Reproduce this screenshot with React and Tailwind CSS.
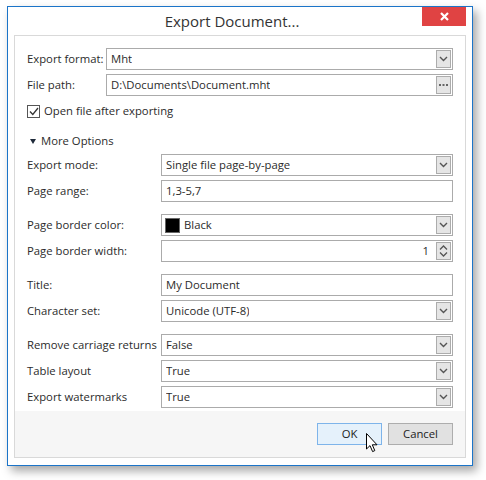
import React from 'react'

function Chevron() {
    return (
        <svg width="9" height="6" viewBox="0 0 9 6">
            <path d="M1 1 L4.5 4.5 L8 1" fill="none" stroke="#555" strokeWidth="1.4" />
        </svg>
    )
}

function DropButton() {
    return (
        <div className="ml-auto w-[15px] h-[18px] border border-[#acacac] bg-[#e5e5e5] flex items-center justify-center">
            <Chevron />
        </div>
    )
}

function Field({ value, drop, children }) {
    return (
        <div className="h-[22px] border border-[#ababab] bg-white flex items-center pl-[4px] pr-[1px]">
            {children}
            {value && <span className="truncate">{value}</span>}
            {drop && <DropButton />}
        </div>
    )
}

function Row({ label, ...rest }) {
    return (
        <>
            <div className="h-[22px] flex items-center whitespace-nowrap">{label}</div>
            <Field {...rest} />
        </>
    )
}

function Cursor() {
    return (
        <svg width="13" height="20" viewBox="0 0 13 20" className="absolute left-[49px] top-[10px]">
            <path d="M0.5 0.5 L0.5 16 L4 12.6 L6.6 18.6 L8.8 17.6 L6.3 11.8 L11 11.8 Z" fill="#fff" stroke="#000" strokeWidth="1" strokeLinejoin="round" />
        </svg>
    )
}

export default function App() {
    return (
        <div className="w-[486px] h-[480px] bg-white pl-[7px] pt-[6px] font-['Open_Sans',sans-serif] text-[11.3px] text-[#2b2b2b]">
            <div className="w-[466px] h-[460px] border border-[#1b74c8] bg-white flex flex-col shadow-[4px_5px_9px_rgba(0,0,0,0.35)]">
                {/* title bar */}
                <div className="h-[28px] flex items-start">
                    <div className="flex-1 h-full flex items-center justify-center pl-[34px] text-[15px] text-[#333]">
                        Export Document...
                    </div>
                    <div className="w-[44px] h-[19px] mr-[6px] bg-[#e04343] flex items-center justify-center">
                        <svg width="9" height="9" viewBox="0 0 9 9">
                            <path d="M1 1 L8 8 M8 1 L1 8" stroke="#fff" strokeWidth="2.2" />
                        </svg>
                    </div>
                </div>

                <div className="mx-[6px] mb-[7px] flex-1 border border-[#d9d9d9] flex flex-col">
                    <div className="flex-1 px-[12px] pt-[12px]">
                        <div className="grid grid-cols-[79px_1fr] gap-y-[4px]">
                            <Row label="Export format:" value="Mht" drop />
                            <div className="h-[22px] flex items-center">File path:</div>
                            <Field value="D:\Documents\Document.mht">
                                <div className="order-last ml-auto w-[15px] h-[18px] border border-[#acacac] bg-[#e5e5e5] flex items-center justify-center">
                                    <svg width="9" height="2" viewBox="0 0 9 2">
                                        <rect x="0" y="0" width="2" height="2" fill="#666" />
                                        <rect x="3.5" y="0" width="2" height="2" fill="#666" />
                                        <rect x="7" y="0" width="2" height="2" fill="#666" />
                                    </svg>
                                </div>
                            </Field>
                        </div>

                        <div className="mt-[9px] h-[13px] flex items-center gap-[4px]">
                            <div className="w-[13px] h-[13px] border border-[#555] bg-white flex items-center justify-center">
                                <svg width="10" height="9" viewBox="0 0 10 9">
                                    <path d="M1 4.5 L3.8 7.5 L9 1" fill="none" stroke="#333" strokeWidth="1.3" />
                                </svg>
                            </div>
                            <span>Open file after exporting</span>
                        </div>

                        <div className="mt-[15px] h-[16px] flex items-center gap-[5px] pl-[3px]">
                            <svg width="6" height="5" viewBox="0 0 6 5">
                                <path d="M0 0 L6 0 L3 5 Z" fill="#1e2a3a" />
                            </svg>
                            <span>More Options</span>
                        </div>

                        <div className="mt-[5px] flex flex-col gap-[12px]">
                            <div className="grid grid-cols-[134px_1fr] gap-y-[4px]">
                                <Row label="Export mode:" value="Single file page-by-page" drop />
                                <Row label="Page range:" value="1,3-5,7" />
                            </div>
                            <div className="grid grid-cols-[134px_1fr] gap-y-[4px]">
                                <Row label="Page border color:" drop>
                                    <div className="w-[15px] h-[15px] bg-black border border-[#666] mr-[4px] -ml-[1px]" />
                                    <span>Black</span>
                                </Row>
                                <div className="h-[22px] flex items-center">Page border width:</div>
                                <div className="h-[22px] border border-[#ababab] bg-white flex items-center justify-end pr-[1px]">
                                    <span className="mr-[7px]">1</span>
                                    <div className="w-[15px] h-[18px] border border-[#acacac] bg-[#e5e5e5] flex flex-col items-center justify-center gap-[2px]">
                                        <svg width="9" height="5" viewBox="0 0 9 5">
                                            <path d="M1 4.5 L4.5 1 L8 4.5" fill="none" stroke="#555" strokeWidth="1.3" />
                                        </svg>
                                        <svg width="9" height="5" viewBox="0 0 9 5">
                                            <path d="M1 0.5 L4.5 4 L8 0.5" fill="none" stroke="#555" strokeWidth="1.3" />
                                        </svg>
                                    </div>
                                </div>
                            </div>
                            <div className="grid grid-cols-[134px_1fr] gap-y-[4px]">
                                <Row label="Title:" value="My Document" />
                                <Row label="Character set:" value="Unicode (UTF-8)" drop />
                            </div>
                            <div className="grid grid-cols-[134px_1fr] gap-y-[4px]">
                                <Row label="Remove carriage returns" value="False" drop />
                                <Row label="Table layout" value="True" drop />
                                <Row label="Export watermarks" value="True" drop />
                            </div>
                        </div>
                    </div>

                    <div className="h-[46px] bg-[#f6f6f6] px-[12px] flex items-center justify-end gap-[6px]">
                        <div className="relative">
                            <button className="w-[65px] h-[22px] border border-[#7eb4ea] bg-[#e5f1fb] text-[#222]">OK</button>
                            <Cursor />
                        </div>
                        <button className="w-[65px] h-[22px] border border-[#adadad] bg-[#e1e1e1] text-[#222]">Cancel</button>
                    </div>
                </div>
            </div>
        </div>
    )
}
